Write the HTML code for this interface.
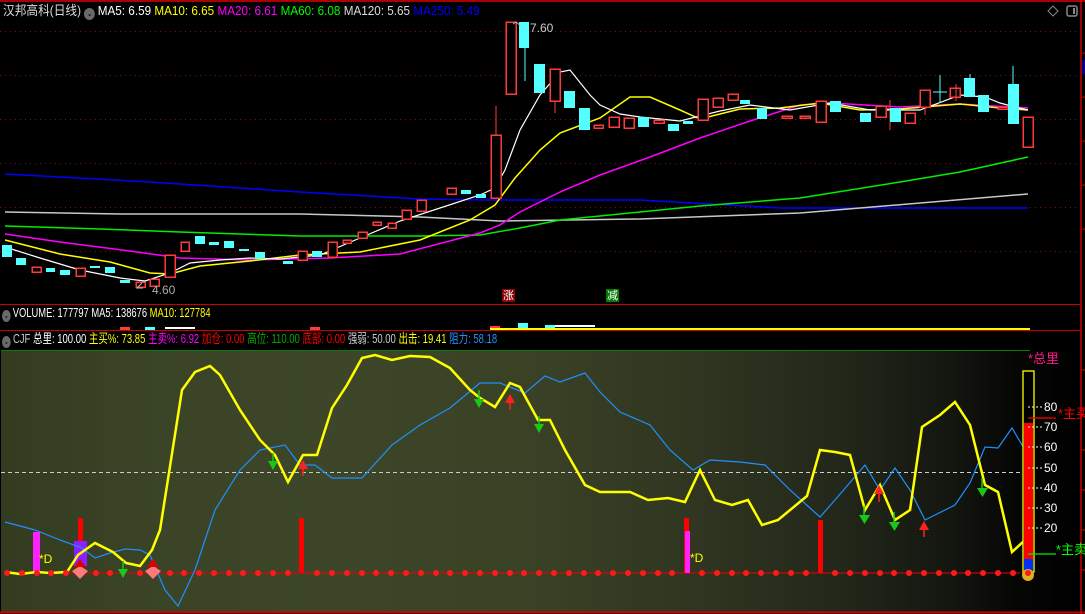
<!DOCTYPE html>
<html><head><meta charset="utf-8"><style>
*{margin:0;padding:0}
body{width:1085px;height:614px;background:#000;overflow:hidden;position:relative;font-family:"Liberation Sans","Noto Sans CJK SC",sans-serif;font-size:12px}
.t{position:absolute;white-space:nowrap;line-height:14px;transform-origin:0 50%}
.ic{display:inline-block;width:12px;height:12px;border-radius:50%;background:#6a6a6a;vertical-align:-1px;margin-right:3px;color:#000;font-size:8px;text-align:center;line-height:12px}
#ind{position:absolute;left:1px;top:351px;width:1080px;height:261px;background:linear-gradient(90deg,#333b20 0%,#3a4326 12%,#3d4628 30%,#3a4226 48%,#2f3520 65%,#22271a 78%,#141610 88%,#060605 94%,#000 100%)}
</style></head><body>
<div id="ind"></div>
<svg width="1085" height="614" style="position:absolute;left:0;top:0">
<line x1="0" y1="1" x2="1085" y2="1" stroke="#a00" stroke-width="2"/>
<line x1="1081" y1="0" x2="1081" y2="614" stroke="#c00" stroke-width="1.5"/>
<line x1="0" y1="304.5" x2="1081" y2="304.5" stroke="#c00"/>
<line x1="0" y1="330.5" x2="1081" y2="330.5" stroke="#c00"/>
<line x1="0" y1="612.5" x2="1085" y2="612.5" stroke="#c00" stroke-width="2"/>
<line x1="1" y1="350.5" x2="1030" y2="350.5" stroke="#0a7a0a"/>
<g stroke="#7a1010" stroke-dasharray="1,4">
<line x1="0" y1="31.5" x2="1080" y2="31.5"/><line x1="0" y1="75.5" x2="1080" y2="75.5"/>
<line x1="0" y1="119.5" x2="1080" y2="119.5"/><line x1="0" y1="163.5" x2="1080" y2="163.5"/>
<line x1="0" y1="207.5" x2="1080" y2="207.5"/><line x1="0" y1="251.5" x2="1080" y2="251.5"/>
</g>
<g stroke="#c00"><line x1="1081" y1="53" x2="1085" y2="53"/><line x1="1081" y1="97" x2="1085" y2="97"/><line x1="1081" y1="141" x2="1085" y2="141"/><line x1="1081" y1="185" x2="1085" y2="185"/><line x1="1081" y1="229" x2="1085" y2="229"/></g>
<rect x="1082" y="60" width="3" height="14" fill="#00008a"/>
<polyline fill="none" stroke="#0000ff" stroke-width="1.5" points="5,174 150,182 300,192 420,199 490,200 640,200 780,208 1028,208"/>
<polyline fill="none" stroke="#c8c8c8" stroke-width="1.5" points="5,212 120,214 300,214 420,217 500,221 640,219 800,213 1028,194"/>
<polyline fill="none" stroke="#00ee00" stroke-width="1.5" points="5,226 100,229 180,232 300,236 420,236 480,235 520,228 560,220 640,212 700,206 800,198 900,182 960,172 1028,157"/>
<polyline fill="none" stroke="#ff00ff" stroke-width="1.5" points="5,234 60,242 130,251 180,258 250,260 330,258 400,254 480,233 500,225 520,212 560,192 600,175 650,157 700,138 750,121 800,105 830,103 900,107 960,104 1028,108"/>
<polyline fill="none" stroke="#ffff00" stroke-width="1.5" points="5,240 60,254 110,262 150,273 170,274 200,266 250,261 300,255 360,252 420,240 470,220 495,205 515,178 540,150 560,133 600,118 630,97 650,97 680,110 700,119 740,109 780,108 820,103 860,110 900,109 960,104 1000,108 1028,110"/>
<polyline fill="none" stroke="#ffffff" stroke-width="1.2" points="5,247 40,258 80,270 120,278 145,281 170,273 190,263 220,260 250,258 280,259 320,255 360,238 400,221 440,208 480,195 495,188 505,170 520,130 540,95 560,72 570,70 590,95 600,105 620,114 640,117 680,121 720,111 750,105 790,110 830,103 870,110 920,110 960,95 985,97 1000,103 1015,107 1028,110"/>
<g stroke="#ff3a3a" stroke-width="1.5" fill="#000" shape-rendering="crispEdges">
<rect x="32" y="267" width="9" height="5"/><rect x="76" y="268" width="9" height="8"/><rect x="136" y="282" width="9" height="5"/><rect x="150" y="279" width="9" height="7"/><rect x="165" y="255" width="10" height="22"/><rect x="181" y="242" width="8" height="9"/><rect x="298" y="251" width="9" height="9"/><rect x="328" y="242" width="9" height="15"/><rect x="343" y="240" width="8" height="3"/><rect x="358" y="232" width="9" height="6"/><rect x="373" y="222" width="8" height="3"/><rect x="388" y="223" width="8" height="5"/><rect x="402" y="210" width="9" height="9"/><rect x="417" y="200" width="9" height="11"/><rect x="447" y="188" width="9" height="6"/><rect x="491" y="135" width="10" height="63"/><rect x="506" y="22" width="10" height="72"/><rect x="550" y="69" width="10" height="32"/><rect x="594" y="125" width="9" height="3"/><rect x="609" y="117" width="10" height="10"/><rect x="624" y="118" width="10" height="10"/><rect x="654" y="120" width="10" height="3"/><rect x="698" y="99" width="10" height="21"/><rect x="713" y="98" width="10" height="9"/><rect x="728" y="94" width="10" height="6"/><rect x="782" y="116" width="10" height="2"/><rect x="800" y="116" width="10" height="2"/><rect x="816" y="101" width="10" height="21"/><rect x="876" y="106" width="10" height="11"/><rect x="905" y="113" width="10" height="10"/><rect x="920" y="90" width="10" height="17"/><rect x="950" y="88" width="10" height="9"/><rect x="998" y="107" width="10" height="2"/><rect x="1023" y="117" width="10" height="30"/>
</g>
<g stroke="#ff3a3a"><line x1="496" y1="106" x2="496" y2="135"/><line x1="555" y1="101" x2="555" y2="113"/><line x1="890" y1="100" x2="890" y2="130"/><line x1="925" y1="107" x2="925" y2="115"/><line x1="1010" y1="100" x2="1010" y2="118"/><line x1="956" y1="84" x2="956" y2="101"/></g>
<g fill="#54ffff">
<rect x="2" y="245" width="10" height="12"/><rect x="16" y="258" width="10" height="7"/><rect x="46" y="268" width="9" height="4"/><rect x="60" y="270" width="10" height="5"/><rect x="90" y="266" width="10" height="2"/><rect x="105" y="267" width="10" height="6"/><rect x="120" y="280" width="10" height="3"/><rect x="195" y="236" width="10" height="8"/><rect x="209" y="242" width="10" height="3"/><rect x="224" y="241" width="10" height="7"/><rect x="239" y="249" width="10" height="2"/><rect x="255" y="252" width="10" height="7"/><rect x="283" y="261" width="10" height="3"/><rect x="312" y="251" width="10" height="6"/><rect x="461" y="190" width="10" height="4"/><rect x="476" y="194" width="10" height="4"/><rect x="519" y="22" width="10" height="26"/><rect x="534" y="64" width="11" height="29"/><rect x="564" y="91" width="11" height="17"/><rect x="579" y="108" width="11" height="22"/><rect x="638" y="117" width="11" height="10"/><rect x="668" y="124" width="11" height="7"/><rect x="683" y="121" width="10" height="3"/><rect x="740" y="100" width="10" height="4"/><rect x="757" y="108" width="10" height="11"/><rect x="830" y="101" width="11" height="11"/><rect x="860" y="113" width="11" height="9"/><rect x="890" y="108" width="11" height="14"/><rect x="964" y="78" width="11" height="19"/><rect x="978" y="95" width="11" height="17"/><rect x="1008" y="84" width="11" height="40"/>
</g>
<g stroke="#54ffff"><line x1="525" y1="48" x2="525" y2="81"/><line x1="1013" y1="66" x2="1013" y2="84"/><line x1="970" y1="74" x2="970" y2="78"/><line x1="940" y1="75" x2="940" y2="103"/><line x1="933" y1="92" x2="947" y2="92"/></g>
<polyline points="521,26 516,22 513,24" fill="none" stroke="#bbb"/>
<polyline points="142,283 137,288 143,288" fill="none" stroke="#bbb"/>
<rect x="502" y="289" width="13" height="13" fill="#8b0000"/><rect x="606" y="289" width="13" height="13" fill="#007a00"/>
<g fill="#ff3a3a"><rect x="120" y="327" width="10" height="3"/><rect x="310" y="327" width="10" height="3"/><rect x="490" y="326" width="10" height="4"/></g>
<g fill="#54ffff"><rect x="145" y="327" width="10" height="3"/><rect x="518" y="323" width="10" height="7"/><rect x="545" y="325" width="10" height="5"/></g>
<g fill="#fff"><rect x="165" y="327" width="30" height="2"/><rect x="555" y="325" width="40" height="2"/></g>
<rect x="490" y="328" width="540" height="2" fill="#ffff00"/>
<line x1="1" y1="472.5" x2="1020" y2="472.5" stroke="#ccc" stroke-dasharray="4,3"/>
<line x1="5" y1="573" x2="1020" y2="573" stroke="#e00"/>
<g fill="#ff0000"><rect x="78" y="518" width="5" height="55"/><rect x="299" y="518" width="5" height="55"/><rect x="684" y="518" width="5" height="55"/><rect x="818" y="520" width="5" height="53"/></g>
<rect x="33" y="532" width="7" height="41" fill="#ff22ff"/><rect x="74" y="541" width="13" height="25" fill="#8a20ff"/><rect x="685" y="531" width="5" height="42" fill="#ff22ff"/>
<polyline fill="none" stroke="#1e90ff" stroke-width="1.2" points="5,522 35,530 60,540 82,548 95,558 110,553 125,549 140,550 150,555 165,590 178,606 195,570 215,510 240,470 260,450 285,445 300,465 315,465 332,478 362,478 392,445 420,425 450,408 480,383 500,383 525,393 545,376 560,382 585,373 600,392 620,412 650,425 670,450 693,470 710,460 740,462 765,465 790,490 820,517 835,500 865,465 880,490 895,468 910,490 925,520 955,505 970,483 985,447 998,448 1012,428 1025,450"/>
<polyline fill="none" stroke="#ffff00" stroke-width="2.5" points="5,572 20,574 37,572 50,573 67,572 78,555 95,543 113,552 126,563 140,566 152,550 160,530 182,390 195,372 210,366 220,375 240,410 260,440 275,455 288,482 303,455 317,455 332,408 347,385 362,358 375,355 392,360 410,356 430,357 450,368 470,390 480,398 495,407 510,383 520,387 538,420 550,420 565,450 585,485 600,492 630,492 648,500 668,498 685,502 700,470 715,500 732,505 748,500 762,525 778,520 807,496 820,450 835,452 850,455 865,510 880,485 895,520 910,510 922,427 940,415 955,402 970,425 985,485 998,492 1012,552 1025,540 1029,535"/>
<g fill="#18c818"><path d="M268,461h10l-5,9z"/><path d="M474,399h10l-5,9z"/><path d="M534,424h10l-5,9z"/><path d="M118,569h10l-5,9z"/><path d="M859,515h11l-5.5,9z"/><path d="M889,522h11l-5.5,9z"/><path d="M977,488h11l-5.5,9z"/></g>
<g stroke="#18c818" stroke-width="1.5"><line x1="273" y1="453" x2="273" y2="463"/><line x1="479" y1="390" x2="479" y2="400"/><line x1="539" y1="416" x2="539" y2="426"/><line x1="123" y1="561" x2="123" y2="571"/><line x1="864" y1="506" x2="864" y2="517"/><line x1="894" y1="512" x2="894" y2="524"/><line x1="982" y1="478" x2="982" y2="490"/></g>
<g fill="#ff2020"><path d="M298,469h10l-5,-9z"/><path d="M505,403h10l-5,-9z"/><path d="M874,494h10l-5,-9z"/><path d="M919,530h10l-5,-9z"/></g>
<g stroke="#ff2020" stroke-width="1.5"><line x1="303" y1="466" x2="303" y2="476"/><line x1="510" y1="400" x2="510" y2="410"/><line x1="879" y1="491" x2="879" y2="502"/><line x1="924" y1="527" x2="924" y2="537"/></g>
<g fill="#ff7a7a"><path d="M72,571l8,-5 8,5 -8,8z"/><path d="M145,571l8,-5 8,5 -8,8z"/></g>
<g fill="#d00"><path d="M74,567l6,-8 6,8z"/><path d="M147,567l6,-8 6,8z"/></g>
<g fill="#ff1a1a">
<circle cx="7" cy="573" r="3"/><circle cx="22" cy="573" r="3"/><circle cx="37" cy="573" r="3"/><circle cx="51" cy="573" r="3"/><circle cx="66" cy="573" r="3"/><circle cx="96" cy="573" r="3"/><circle cx="110" cy="573" r="3"/><circle cx="140" cy="573" r="3"/><circle cx="170" cy="573" r="3"/><circle cx="184" cy="573" r="3"/><circle cx="199" cy="573" r="3"/><circle cx="214" cy="573" r="3"/><circle cx="229" cy="573" r="3"/><circle cx="243" cy="573" r="3"/><circle cx="258" cy="573" r="3"/><circle cx="273" cy="573" r="3"/><circle cx="288" cy="573" r="3"/><circle cx="317" cy="573" r="3"/><circle cx="332" cy="573" r="3"/><circle cx="347" cy="573" r="3"/><circle cx="362" cy="573" r="3"/><circle cx="376" cy="573" r="3"/><circle cx="391" cy="573" r="3"/><circle cx="406" cy="573" r="3"/><circle cx="421" cy="573" r="3"/><circle cx="436" cy="573" r="3"/><circle cx="450" cy="573" r="3"/><circle cx="465" cy="573" r="3"/><circle cx="480" cy="573" r="3"/><circle cx="495" cy="573" r="3"/><circle cx="510" cy="573" r="3"/><circle cx="524" cy="573" r="3"/><circle cx="539" cy="573" r="3"/><circle cx="554" cy="573" r="3"/><circle cx="569" cy="573" r="3"/><circle cx="584" cy="573" r="3"/><circle cx="598" cy="573" r="3"/><circle cx="613" cy="573" r="3"/><circle cx="628" cy="573" r="3"/><circle cx="643" cy="573" r="3"/><circle cx="658" cy="573" r="3"/><circle cx="672" cy="573" r="3"/><circle cx="702" cy="573" r="3"/><circle cx="717" cy="573" r="3"/><circle cx="732" cy="573" r="3"/><circle cx="746" cy="573" r="3"/><circle cx="761" cy="573" r="3"/><circle cx="776" cy="573" r="3"/><circle cx="791" cy="573" r="3"/><circle cx="806" cy="573" r="3"/><circle cx="835" cy="573" r="3"/><circle cx="850" cy="573" r="3"/><circle cx="865" cy="573" r="3"/><circle cx="880" cy="573" r="3"/><circle cx="894" cy="573" r="3"/><circle cx="909" cy="573" r="3"/><circle cx="924" cy="573" r="3"/><circle cx="939" cy="573" r="3"/><circle cx="954" cy="573" r="3"/><circle cx="968" cy="573" r="3"/><circle cx="983" cy="573" r="3"/><circle cx="998" cy="573" r="3"/><circle cx="1013" cy="573" r="3"/>
</g>
<rect x="1023" y="371" width="11" height="201" fill="#000" stroke="#ffff00" stroke-width="1.3"/>
<rect x="1024" y="423" width="9" height="136" fill="#ff0000"/>
<rect x="1024" y="559" width="9" height="13" fill="#0030ff"/>
<circle cx="1028" cy="575" r="6" fill="#e0b020"/>
<circle cx="1028" cy="573" r="3" fill="#ff1a1a"/>
<line x1="1028" y1="418" x2="1056" y2="418" stroke="#ff0000" stroke-width="1.3"/>
<line x1="1028" y1="554" x2="1056" y2="554" stroke="#00ee00" stroke-width="1.3"/>
<g stroke="#fff" stroke-dasharray="2,2"><line x1="1028" y1="407" x2="1042" y2="407"/><line x1="1028" y1="427" x2="1042" y2="427"/><line x1="1028" y1="447" x2="1042" y2="447"/><line x1="1028" y1="468" x2="1042" y2="468"/><line x1="1028" y1="488" x2="1042" y2="488"/><line x1="1028" y1="508" x2="1042" y2="508"/><line x1="1028" y1="528" x2="1042" y2="528"/></g>
<g stroke="#c00"><line x1="1081" y1="370" x2="1085" y2="370"/><line x1="1081" y1="410" x2="1085" y2="410"/><line x1="1081" y1="450" x2="1085" y2="450"/><line x1="1081" y1="490" x2="1085" y2="490"/><line x1="1081" y1="530" x2="1085" y2="530"/><line x1="1081" y1="570" x2="1085" y2="570"/></g>
<path d="M1053,6l5,5 -5,5 -5,-5z" fill="none" stroke="#888"/>
<rect x="1067" y="6" width="10" height="10" rx="2" fill="none" stroke="#888" stroke-width="1.5"/><rect x="1073" y="8" width="2" height="6" fill="#888"/>
</svg>
<div class="t" style="left:3px;top:4px;color:#ddd;font-size:13px;transform:scaleX(0.9)">汉邦高科(日线) <span class="ic">⌄</span><span style="color:#fff">MA5: 6.59</span> <span style="color:#ff0">MA10: 6.65</span> <span style="color:#f0f">MA20: 6.61</span> <span style="color:#0f0">MA60: 6.08</span> <span style="color:#ddd">MA120: 5.65</span> <span style="color:#0000ff">MA250: 5.49</span></div>
<div class="t" style="left:530px;top:21px;color:#ccc;font-size:12px">7.60</div>
<div class="t" style="left:152px;top:283px;color:#aaa;font-size:12px">4.60</div>
<div class="t" style="left:503px;top:289px;color:#fff;font-size:11px">涨</div>
<div class="t" style="left:607px;top:289px;color:#fff;font-size:11px">减</div>
<div class="t" style="left:2px;top:306px;color:#fff;font-size:13px;transform:scaleX(0.72)"><span class="ic">⌄</span>VOLUME: 177797 MA5: 138676 <span style="color:#ff0">MA10: 127784</span></div>
<div class="t" style="left:2px;top:332px;color:#ccc;font-size:13px;transform:scaleX(0.73)"><span class="ic">⌄</span>CJF <span style="color:#fff">总里: 100.00</span> <span style="color:#ff0">主买%: 73.85</span> <span style="color:#f0f">主卖%: 6.92</span> <span style="color:#f00">加仓: 0.00</span> <span style="color:#0a0">高位: 110.00</span> <span style="color:#f00">底部: 0.00</span> <span style="color:#ccc">强弱: 50.00</span> <span style="color:#ff0">出击: 19.41</span> <span style="color:#1e90ff">阻力: 58.18</span></div>
<div class="t" style="left:39px;top:552px;color:#ff0">*D</div>
<div class="t" style="left:690px;top:551px;color:#ff0">*D</div>
<div class="t" style="left:1028px;top:352px;color:#ff1a8a;font-size:13px">*总里</div>
<div class="t" style="left:1058px;top:407px;color:#f00;font-size:13px">*主买</div>
<div class="t" style="left:1056px;top:543px;color:#0f0;font-size:13px">*主卖</div>
<div class="t" style="left:1044px;top:400px;color:#fff;font-size:12px">80</div>
<div class="t" style="left:1044px;top:420px;color:#fff;font-size:12px">70</div>
<div class="t" style="left:1044px;top:440px;color:#fff;font-size:12px">60</div>
<div class="t" style="left:1044px;top:461px;color:#fff;font-size:12px">50</div>
<div class="t" style="left:1044px;top:481px;color:#fff;font-size:12px">40</div>
<div class="t" style="left:1044px;top:501px;color:#fff;font-size:12px">30</div>
<div class="t" style="left:1044px;top:521px;color:#fff;font-size:12px">20</div>
</body></html>
